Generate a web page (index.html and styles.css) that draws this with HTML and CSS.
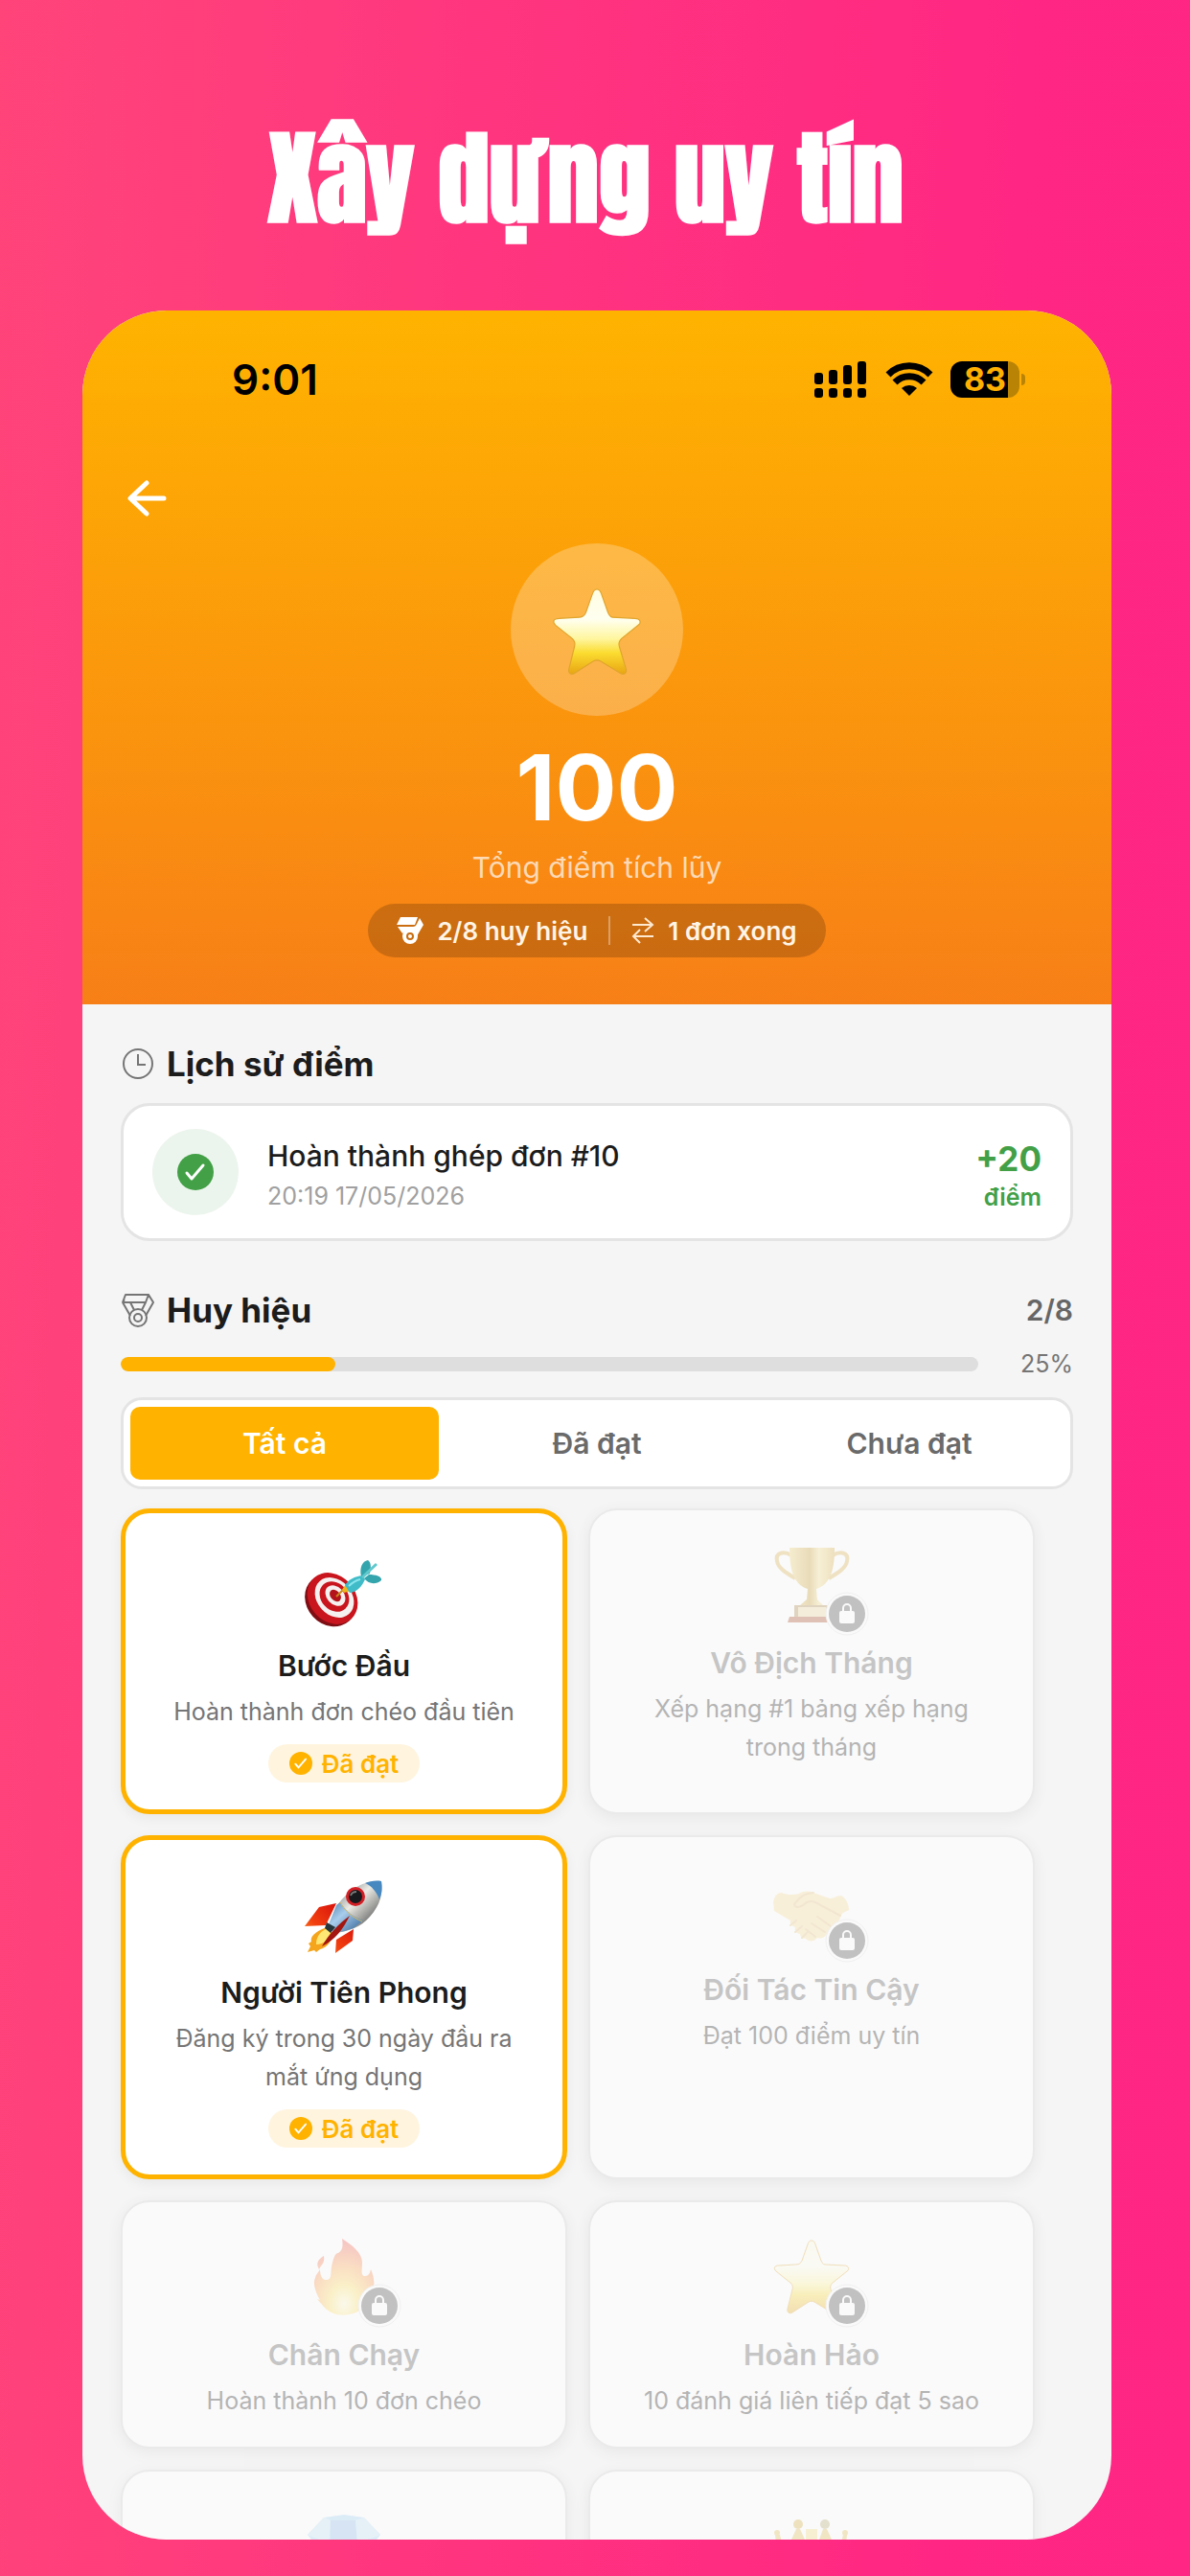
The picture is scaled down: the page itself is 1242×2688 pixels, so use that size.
FILE: index.html
```html
<!DOCTYPE html>
<html lang="vi">
<head>
    <meta charset="UTF-8">
    <meta name="viewport" content="width=device-width, initial-scale=1.0">
    <title>Xây dựng uy tín</title>
    <link rel="stylesheet" href="styles.css">
</head>
<body>
    <!-- Shared shapes -->
    <svg class="defs" width="0" height="0" aria-hidden="true">
        <defs>
            <linearGradient id="starFill" x1="0" y1="0" x2="0" y2="1">
                <stop offset="0" stop-color="#fffde0"/>
                <stop offset="0.35" stop-color="#fffff0"/>
                <stop offset="0.58" stop-color="#fff6a0"/>
                <stop offset="0.75" stop-color="#fbdc30"/>
                <stop offset="1" stop-color="#e8a512"/>
            </linearGradient>
            <linearGradient id="gold" x1="0" y1="0" x2="1" y2="0">
                <stop offset="0" stop-color="#f3d774"/>
                <stop offset="0.45" stop-color="#c79a2c"/>
                <stop offset="0.65" stop-color="#f6e08a"/>
                <stop offset="1" stop-color="#d9a93a"/>
            </linearGradient>
            <linearGradient id="metal" x1="0" y1="0" x2="1" y2="1">
                <stop offset="0.2" stop-color="#8f979c"/>
                <stop offset="0.45" stop-color="#eceae4"/>
                <stop offset="0.8" stop-color="#6b6d6c"/>
            </linearGradient>
            <linearGradient id="blueMetal" x1="0" y1="0" x2="1" y2="1">
                <stop offset="0" stop-color="#4d7fae"/>
                <stop offset="0.4" stop-color="#a9cdec"/>
                <stop offset="1" stop-color="#2b5c91"/>
            </linearGradient>
            <linearGradient id="fin" x1="1" y1="0" x2="0" y2="1">
                <stop offset="0.2" stop-color="#d9140c"/>
                <stop offset="0.6" stop-color="#f2400f"/>
                <stop offset="1" stop-color="#fbb03a"/>
            </linearGradient>
            <radialGradient id="flame" cx="0.5" cy="0.85" r="0.8">
                <stop offset="0" stop-color="#fffbd0"/>
                <stop offset="0.3" stop-color="#ffe25c"/>
                <stop offset="0.65" stop-color="#ff9d4a"/>
                <stop offset="1" stop-color="#f4574a"/>
            </radialGradient>
            <symbol id="star" viewBox="0 0 96 96">
                <path d="M48 12c2 0 3 1 4 4l6 17c1 2 2 4 4 4l20 1c5 0 6 4 3 6L70 56c-2 2-3 4-2 7l6 20c1 4-2 6-5 4L51 76c-2-1-4-1-6 0L28 87c-3 2-6 0-5-4l5-20c1-3 0-5-2-7L11 44c-3-3-2-6 3-6l18-1c3 0 5-2 6-4l6-17c1-3 2-4 4-4z" fill="url(#starFill)" stroke="#e0a52c" stroke-width="1"/>
            </symbol>
            <symbol id="check" viewBox="0 0 38 38">
                <circle cx="19" cy="19" r="19" fill="currentColor"/>
                <path d="M10 20l5 6 12-14" fill="none" stroke="#fff" stroke-width="3" stroke-linecap="round" stroke-linejoin="round"/>
            </symbol>
            <symbol id="lock" viewBox="0 0 46 46">
                <circle cx="23" cy="23" r="22" fill="#fff" stroke="#ececec" stroke-width="1"/>
                <circle cx="23" cy="23" r="19" fill="#8e8e8e"/>
                <path d="M19 21v-4a4 4 0 0 1 8 0v4" fill="none" stroke="#fff" stroke-width="2"/>
                <rect x="15" y="20" width="16" height="13" rx="2" fill="#fff"/>
            </symbol>
        </defs>
    </svg>

    <h1 class="headline">Xây dựng uy tín</h1>

    <main class="phone">
        <header class="hero">
            <div class="status">
                <span class="time">9:01</span>
                <div class="status-icons">
                    <svg width="56" height="38" viewBox="0 0 56 38">
                        <rect x="0" y="12" width="9" height="12" rx="3"/>
                        <rect x="15" y="9" width="9" height="15" rx="3"/>
                        <rect x="30" y="4" width="9" height="20" rx="3"/>
                        <rect x="45" y="0" width="9" height="24" rx="3"/>
                        <rect x="0" y="28" width="9" height="10" rx="3"/>
                        <rect x="15" y="28" width="9" height="10" rx="3"/>
                        <rect x="30" y="28" width="9" height="10" rx="3"/>
                        <rect x="45" y="28" width="9" height="10" rx="3"/>
                    </svg>
                    <svg width="50" height="38" viewBox="0 0 50 38">
                        <path d="M3 14a31 31 0 0 1 44 0M10 22a21 21 0 0 1 30 0" fill="none" stroke="#000" stroke-width="7"/>
                        <path d="M25 36l-8-8a12 12 0 0 1 16 0z"/>
                    </svg>
                    <div class="battery"><span class="battery-level">83</span></div>
                </div>
            </div>

            <button class="back-btn" type="button" aria-label="Quay lại">
                <svg width="48" height="48" viewBox="0 0 48 48">
                    <path d="M41 24H7M23 8L6 24l17 16" fill="none" stroke="#fff" stroke-width="5" stroke-linecap="round" stroke-linejoin="round"/>
                </svg>
            </button>

            <div class="score">
                <div class="score-icon"><svg width="112" height="112"><use href="#star"/></svg></div>
                <div class="score-value">100</div>
                <div class="score-label">Tổng điểm tích lũy</div>
                <div class="score-pill">
                    <svg width="28" height="28" viewBox="0 0 28 28">
                        <path d="M4 0h18l-3 8H0z" fill="#fff"/>
                        <path d="M24 1l4 7-7 12c-1-4-4-6-8-6-3 0-5 1-7 3L1 10h16q3 0 4-3z" fill="#fff"/>
                        <circle cx="14" cy="20" r="8" fill="#fff"/>
                        <circle cx="14" cy="20" r="3" fill="none" stroke="#c96d11" stroke-width="2"/>
                    </svg>
                    <span>2/8 huy hiệu</span>
                    <i class="pill-divider"></i>
                    <svg width="24" height="28" viewBox="0 0 24 28">
                        <path d="M1 8h21M14 1l8 7-8 7M23 20H2M9 13l-7 7 7 7" fill="none" stroke="#ffe9d0" stroke-width="2"/>
                    </svg>
                    <span>1 đơn xong</span>
                </div>
            </div>
        </header>

        <section class="content">
            <div class="section-head">
                <svg width="36" height="36" viewBox="0 0 36 36" fill="none" stroke="#757575" stroke-width="2">
                    <circle cx="18" cy="18" r="15"/>
                    <path d="M18 8v11h8"/>
                </svg>
                <h2>Lịch sử điểm</h2>
            </div>

            <div class="history">
                <div class="history-icon"><svg width="38" height="38"><use href="#check"/></svg></div>
                <div class="history-info">
                    <div class="history-title">Hoàn thành ghép đơn #10</div>
                    <div class="history-date">20:19 17/05/2026</div>
                </div>
                <div class="history-points">
                    <strong>+20</strong>
                    <span>điểm</span>
                </div>
            </div>

            <div class="section-head section-head-badges">
                <svg width="36" height="36" viewBox="0 0 36 36" fill="none" stroke="#757575" stroke-width="2" stroke-linejoin="round">
                    <path d="M5 2h24l-3 8H2zM29 2l5 8-8 14M2 10l8 14M10 10l4 8M26 10l-4 8M4 7L2 10"/>
                    <circle cx="18" cy="26" r="9"/>
                    <circle cx="18" cy="26" r="4"/>
                </svg>
                <h2>Huy hiệu</h2>
                <span class="badge-count">2/8</span>
            </div>

            <div class="progress-row">
                <div class="progress" role="progressbar" aria-label="Huy hiệu" aria-valuenow="25" aria-valuemin="0" aria-valuemax="100">
                    <div class="progress-fill" style="width: 25%"></div>
                </div>
                <span class="progress-text">25%</span>
            </div>

            <div class="tabs">
                <button class="tab active" type="button">Tất cả</button>
                <button class="tab" type="button">Đã đạt</button>
                <button class="tab" type="button">Chưa đạt</button>
            </div>

            <div class="badges">
                <article class="badge earned">
                    <div class="emoji">
                        <svg width="96" height="96" viewBox="0 0 96 96">
                            <ellipse cx="34" cy="63" rx="25" ry="29" transform="rotate(-42 34 63)" fill="#7d0f14"/>
                            <ellipse cx="36" cy="61" rx="24" ry="29" transform="rotate(-42 36 61)" fill="#c9151d"/>
                            <ellipse cx="38" cy="60" rx="18" ry="23" transform="rotate(-42 38 60)" fill="#f5f1f0"/>
                            <ellipse cx="38" cy="59" rx="14" ry="17" transform="rotate(-42 38 59)" fill="#c9151d"/>
                            <ellipse cx="39" cy="58" rx="9" ry="12" transform="rotate(-42 39 58)" fill="#f5f1f0"/>
                            <ellipse cx="39" cy="58" rx="5" ry="7" transform="rotate(-42 39 58)" fill="#b3141b"/>
                            <path d="M40 59l9-9" stroke="#c98a1a" stroke-width="2"/>
                            <path d="M46 52l4-6 5 7-7 2z" fill="#f0b51e"/>
                            <path d="M49 47c4-6 10-9 18-10l3 4c-3 7-8 13-16 14z" fill="#3fbcc8"/>
                            <path d="M66 38c-2-9 1-16 7-17 4 3 3 8 2 14zM69 40c5 6 12 7 18 2 1-4-6-6-13-6z" fill="#35a5ad"/>
                            <path d="M67 39l15-14" stroke="#5fc9cd" stroke-width="3"/>
                            <path d="M53 48c4-4 8-6 12-7" stroke="#8be6ee" stroke-width="2" fill="none"/>
                        </svg>
                    </div>
                    <h3>Bước Đầu</h3>
                    <p>Hoàn thành đơn chéo đầu tiên</p>
                    <span class="chip"><svg width="24" height="24"><use href="#check"/></svg>Đã đạt</span>
                </article>

                <article class="badge locked">
                    <div class="emoji">
                        <svg width="96" height="96" viewBox="0 0 96 96">
                            <path d="M27 19c-8-5-17-3-15 6 1 7 9 12 19 18M70 19c8-5 17-3 15 6-1 7-9 12-19 18" fill="none" stroke="#dfb24a" stroke-width="4"/>
                            <path d="M25 11h47c0 20-3 38-19 43l1 11 6 6H36l7-6 1-11C28 49 25 31 25 11z" fill="url(#gold)"/>
                            <path d="M30 71h37v13H30z" fill="#a9833d"/>
                            <path d="M34 73h29v10H34z" fill="#f0d89a"/>
                            <path d="M25 83h47l2 6H23z" fill="#a8481c"/>
                        </svg>
                        <svg class="lock" width="46" height="46"><use href="#lock"/></svg>
                    </div>
                    <h3>Vô Địch Tháng</h3>
                    <p>Xếp hạng #1 bảng xếp hạng trong tháng</p>
                </article>

                <article class="badge earned">
                    <div class="emoji">
                        <svg width="96" height="96" viewBox="0 0 96 96">
                            <path d="M30 63C21 66 12 72 14 78l-3 2 2 3-3 6 7-2 2 2 4-3c8-2 12-9 14-16z" fill="#f5a51c"/>
                            <path d="M31 64c-7 3-12 8-12 17 8 0 13-5 15-12z" fill="#ffe774"/>
                            <path d="M40 38l-18 4L7 62l22-1zM58 65l-1 12-18 13 1-14z" fill="url(#fin)"/>
                            <path d="M87 15C71 13 54 22 41 40L32 60l6 9c13-1 28-6 37-17 11-12 14-25 12-37z" fill="url(#metal)"/>
                            <path d="M40 40L32 60l6 9c8-1 14-3 20-5l10-8c-9-3-17-9-24-19z" fill="url(#blueMetal)"/>
                            <path d="M70 17c5-2 11-3 17-2 1 6 1 12-2 19-3-8-8-14-15-17z" fill="#4788c0"/>
                            <path d="M44 37c5 9 13 16 23 20" fill="none" stroke="#d9b85c" stroke-width="1"/>
                            <path d="M30 58l9 5-5 6-6-5z" fill="#26353a"/>
                            <circle cx="60" cy="31" r="10" fill="#d31f25"/>
                            <circle cx="60" cy="31" r="7" fill="#17191c"/>
                            <path d="M55 30c1-3 3-4 6-4" stroke="#777" stroke-width="2" fill="none"/>
                            <path d="M54 51C43 59 32 70 25 83c14-7 22-18 29-32z" fill="#a3150f"/>
                        </svg>
                    </div>
                    <h3>Người Tiên Phong</h3>
                    <p>Đăng ký trong 30 ngày đầu ra mắt ứng dụng</p>
                    <span class="chip"><svg width="24" height="24"><use href="#check"/></svg>Đã đạt</span>
                </article>

                <article class="badge locked">
                    <div class="emoji">
                        <svg width="96" height="96" viewBox="0 0 96 96">
                            <path d="M8 40c1-6 4-10 9-10 7 3 12 2 18 1 5-3 10-3 15-1l17 6c5 0 7-3 12-3 5 3 8 9 8 15-4 2-8 3-9 8l-4 9-10 8c-3 5-7 5-10 4-4 5-9 4-12 1-4 0-6-3-6-5-4 0-6-4-5-7-4-1-6-4-5-7L9 49z" fill="#fbdf94"/>
                            <path d="M50 30c-10 1-14 4-20 12 1 5 8 3 13-2 4-2 6-1 9 0l26 14M54 55l14 10M48 62l14 9M42 68l10 8M26 64l6-5M31 71l7-6M38 77l6-6" fill="none" stroke="#e6c07a" stroke-width="2" stroke-linecap="round"/>
                        </svg>
                        <svg class="lock" width="46" height="46"><use href="#lock"/></svg>
                    </div>
                    <h3>Đối Tác Tin Cậy</h3>
                    <p>Đạt 100 điểm uy tín</p>
                </article>

                <article class="badge locked">
                    <div class="emoji">
                        <svg width="96" height="96" viewBox="0 0 96 96">
                            <path d="M46 10c11 7 21 15 21 25 0 7-2 14 3 14 4 0 5-3 6-7 2 5 4 10 3 18-1 8-3 13-7 17l1 4-7 3c-12 8-30 8-39-3l-7-8 3 1c-4-7-8-17-5-23 1-4 2-4 5-9 0 6 2 11 6 11 8 0 4-8 7-18 2-8 4-10 6-10 5-3 5-8 4-15zM27 28c1 8-2 8-5 14-4-7 0-11 5-14z" fill="url(#flame)"/>
                        </svg>
                        <svg class="lock" width="46" height="46"><use href="#lock"/></svg>
                    </div>
                    <h3>Chân Chạy</h3>
                    <p>Hoàn thành 10 đơn chéo</p>
                </article>

                <article class="badge locked">
                    <div class="emoji">
                        <svg width="96" height="96"><use href="#star"/></svg>
                        <svg class="lock" width="46" height="46"><use href="#lock"/></svg>
                    </div>
                    <h3>Hoàn Hảo</h3>
                    <p>10 đánh giá liên tiếp đạt 5 sao</p>
                </article>

                <article class="badge locked">
                    <div class="emoji">
                        <svg width="96" height="96" viewBox="0 0 96 96">
                            <path d="M10 38l17-18 21-3 21 3 17 18-38 48z" fill="#9ed3f8"/>
                            <path d="M34 23h26l2 24H34z" fill="#8bb9ec"/>
                            <path d="M10 38l17-18 7 3-2 24zM69 20l17 18-24 9-2-24z" fill="#bfe5f6"/>
                        </svg>
                    </div>
                </article>

                <article class="badge locked">
                    <div class="emoji">
                        <svg width="96" height="96" viewBox="0 0 96 96">
                            <path d="M10 38h5l5 20 12-26h4l10 22 3-8 3 8 8-22h4l12 26 5-20h4l-5 48H15z" fill="#e4c04e"/>
                            <circle cx="34" cy="27" r="5" fill="#d9b13c"/>
                            <circle cx="62" cy="27" r="5" fill="#b8ab70"/>
                            <circle cx="12" cy="36" r="3" fill="#e4c04e"/>
                            <circle cx="83" cy="36" r="3" fill="#e4c04e"/>
                            <rect x="42" y="32" width="12" height="14" fill="#f3df7e"/>
                        </svg>
                    </div>
                </article>
            </div>
        </section>
    </main>
</body>
</html>
```
FILE: styles.css
```css
:root {
    --amber: #ffb300;
    --green: #43a047;
    --text: #1c1c1c;
    --muted: #757575;
    --line: #e0e0e0;
    --page: #f5f5f5;
}

* {
    box-sizing: border-box;
}

body {
    margin: 0;
    height: 100vh;
    padding: 94px 82px 38px 86px;
    display: flex;
    flex-direction: column;
    font-family: Inter, "Noto Sans", sans-serif;
    color: var(--text);
    background: linear-gradient(92deg, #ff447a 0%, #ff3180 50%, #ff2783 80%, #ff2684 100%);
}

h1, h2, h3, p {
    margin: 0;
}

svg {
    display: block;
    flex: none;
}

button {
    font: inherit;
    border: none;
    background: none;
    padding: 0;
    cursor: pointer;
}

.defs {
    position: absolute;
}

.headline {
    height: 230px;
    flex: none;
    padding-right: 24px;
    font-family: Anton, "Liberation Sans Narrow", "Open Sans", sans-serif;
    font-size: 107px;
    font-weight: 700;
    line-height: 184px;
    text-align: center;
    white-space: nowrap;
    color: #fff;
}

.phone {
    flex: 1;
    min-height: 0;
    overflow: hidden;
    border-radius: 88px;
    background: var(--page);
}

/* Hero */
.hero {
    padding: 53px 40px 49px;
    background: linear-gradient(180deg, #ffb300, #f77f17);
}

.status {
    display: flex;
    justify-content: space-between;
    align-items: center;
    height: 38px;
    padding: 0 56px 0 116px;
}

.time {
    font-size: 44px;
    font-weight: 600;
    color: #000;
}

.status-icons {
    display: flex;
    align-items: center;
    gap: 18px;
}

.battery {
    position: relative;
    width: 72px;
    height: 38px;
    border-radius: 12px;
    background: linear-gradient(90deg, #000 83%, #b98306 83%);
    text-align: center;
}

.battery::after {
    content: "";
    position: absolute;
    right: -6px;
    top: 13px;
    width: 4px;
    height: 12px;
    border-radius: 0 4px 4px 0;
    background: #b98306;
}

.battery-level {
    font-size: 34px;
    font-weight: 700;
    line-height: 38px;
    color: #ffb000;
}

.back-btn {
    display: block;
    margin: 81px 0 23px 4px;
}

.score {
    display: flex;
    flex-direction: column;
    align-items: center;
}

.score-icon {
    display: flex;
    align-items: center;
    justify-content: center;
    width: 180px;
    height: 180px;
    border-radius: 50%;
    background: rgba(255, 255, 255, 0.25);
}

.score-value {
    margin-top: 20px;
    font-size: 95px;
    font-weight: 700;
    line-height: 110px;
    color: #fff;
}

.score-label {
    margin-top: 8px;
    font-size: 30px;
    line-height: 40px;
    color: rgba(255, 255, 255, 0.7);
}

.score-pill {
    display: flex;
    align-items: center;
    gap: 14px;
    height: 56px;
    margin-top: 18px;
    padding: 0 30px;
    border-radius: 28px;
    background: rgba(0, 0, 0, 0.18);
    font-size: 26px;
    font-weight: 600;
    color: #fff5e6;
}

.pill-divider {
    width: 2px;
    height: 30px;
    margin: 0 8px;
    background: rgba(255, 255, 255, 0.35);
}

/* Content */
.content {
    padding: 40px;
}

.section-head {
    display: flex;
    align-items: center;
    gap: 12px;
    height: 44px;
}

.section-head h2 {
    font-size: 35px;
    font-weight: 700;
    line-height: 44px;
}

.section-head-badges {
    margin-top: 50px;
}

.badge-count {
    margin-left: auto;
    font-size: 30px;
    font-weight: 600;
    color: #666;
}

.history {
    display: flex;
    align-items: center;
    gap: 30px;
    height: 144px;
    margin-top: 19px;
    padding: 0 30px;
    border: 3px solid #e4e4e4;
    border-radius: 30px;
    background: #fff;
}

.history-icon {
    display: flex;
    align-items: center;
    justify-content: center;
    width: 90px;
    height: 90px;
    border-radius: 50%;
    background: #ecf5ed;
    color: var(--green);
}

.history-info {
    flex: 1;
    padding-top: 8px;
}

.history-title {
    font-size: 30px;
    font-weight: 500;
    line-height: 42px;
}

.history-date {
    font-size: 25px;
    line-height: 42px;
    color: #a0a0a0;
}

.history-points {
    display: flex;
    flex-direction: column;
    align-items: flex-end;
    padding-top: 10px;
    color: var(--green);
}

.history-points strong {
    font-size: 35px;
    line-height: 42px;
}

.history-points span {
    font-size: 25px;
    font-weight: 600;
    line-height: 38px;
}

.progress-row {
    display: flex;
    align-items: center;
    justify-content: space-between;
    height: 30px;
    margin-top: 19px;
}

.progress {
    width: 90%;
    height: 15px;
    border-radius: 8px;
    overflow: hidden;
    background: #dedede;
}

.progress-fill {
    height: 100%;
    border-radius: 8px;
    background: var(--amber);
}

.progress-text {
    font-size: 25px;
    color: var(--muted);
}

.tabs {
    display: flex;
    gap: 4px;
    height: 96px;
    margin-top: 20px;
    padding: 7px;
    border: 3px solid #e4e4e4;
    border-radius: 22px;
    background: #fff;
}

.tab {
    flex: 1;
    border-radius: 10px;
    font-size: 30px;
    font-weight: 600;
    color: #6a6a6a;
}

.tab.active {
    background: var(--amber);
    color: #fff;
}

/* Badge cards */
.badges {
    display: grid;
    grid-template-columns: 1fr 1fr;
    gap: 22px;
    margin-top: 20px;
    padding-right: 40px;
}

.badge {
    display: flex;
    flex-direction: column;
    align-items: center;
    min-height: 250px;
    padding: 28px;
    border: 2px solid var(--line);
    border-radius: 30px;
    background: #fff;
    box-shadow: 0 4px 14px rgba(0, 0, 0, 0.06);
    text-align: center;
}

.badge.earned {
    border: 5px solid var(--amber);
}

.badge.locked {
    opacity: 0.5;
    box-shadow: 0 4px 14px rgba(0, 0, 0, 0.1);
}

.emoji {
    position: relative;
    width: 96px;
    height: 96px;
}

.locked .emoji svg:first-child {
    opacity: 0.6;
}

.lock {
    position: absolute;
    right: -12px;
    bottom: -7px;
}

.badge h3 {
    margin-top: 14px;
    font-size: 30px;
    font-weight: 600;
    line-height: 42px;
}

.badge p {
    margin-top: 7px;
    padding: 0 10px;
    font-size: 25px;
    line-height: 40px;
    color: var(--muted);
}

.locked h3 {
    color: #969696;
}

.chip {
    display: flex;
    align-items: center;
    gap: 10px;
    height: 40px;
    margin-top: 14px;
    padding: 0 22px;
    border-radius: 20px;
    background: #fff4de;
    font-size: 26px;
    font-weight: 600;
    color: var(--amber);
}
```
